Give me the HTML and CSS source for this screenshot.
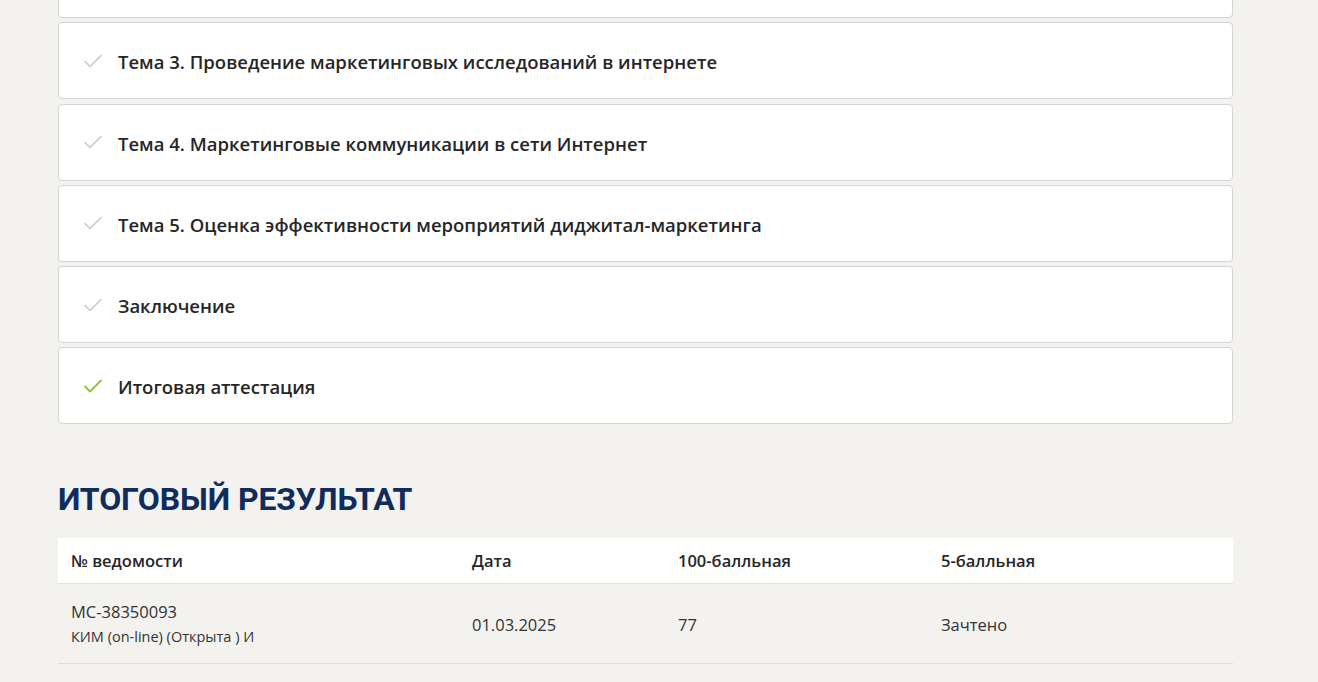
FILE: index.html
```html
<!DOCTYPE html>
<html lang="ru">
<head>
<meta charset="utf-8">
<title>Итоговый результат</title>
<link rel="stylesheet" href="styles.css">
</head>
<body>
<main class="page">
  <ul class="topics">
    <li class="topic"><span class="check"><svg viewBox="0 0 18 14"><path d="M1 7.5 L6 12.5 L17 1.5"/></svg></span><span class="topic-title">Тема 2. Инструменты интернет-маркетинга</span></li>
    <li class="topic"><span class="check"><svg viewBox="0 0 18 14"><path d="M1 7.5 L6 12.5 L17 1.5"/></svg></span><span class="topic-title">Тема 3. Проведение маркетинговых исследований в интернете</span></li>
    <li class="topic"><span class="check"><svg viewBox="0 0 18 14"><path d="M1 7.5 L6 12.5 L17 1.5"/></svg></span><span class="topic-title">Тема 4. Маркетинговые коммуникации в сети Интернет</span></li>
    <li class="topic"><span class="check"><svg viewBox="0 0 18 14"><path d="M1 7.5 L6 12.5 L17 1.5"/></svg></span><span class="topic-title">Тема 5. Оценка эффективности мероприятий диджитал-маркетинга</span></li>
    <li class="topic"><span class="check"><svg viewBox="0 0 18 14"><path d="M1 7.5 L6 12.5 L17 1.5"/></svg></span><span class="topic-title">Заключение</span></li>
    <li class="topic done"><span class="check"><svg viewBox="0 0 18 14"><path d="M1 7.5 L6 12.5 L17 1.5"/></svg></span><span class="topic-title">Итоговая аттестация</span></li>
  </ul>

  <h2 class="result-title">ИТОГОВЫЙ РЕЗУЛЬТАТ</h2>

  <table class="result">
    <thead>
      <tr>
        <th class="c1">№ ведомости</th>
        <th class="c2">Дата</th>
        <th class="c3">100-балльная</th>
        <th class="c4">5-балльная</th>
      </tr>
    </thead>
    <tbody>
      <tr>
        <td class="c1"><div class="num">МС-38350093</div><div class="sub">КИМ (on-line) (Открыта ) И</div></td>
        <td class="c2">01.03.2025</td>
        <td class="c3">77</td>
        <td class="c4">Зачтено</td>
      </tr>
    </tbody>
  </table>
</main>
</body>
</html>
```

FILE: styles.css
```css
html, body {
  margin: 0;
  padding: 0;
}
body {
  background: #f3f2ef;
  font-family: "Open Sans", "Noto Sans", sans-serif;
  color: #222;
  overflow: hidden;
}
.page {
  width: 1175px;
  margin: -59px 0 0 58px;
}
.topics {
  list-style: none;
  margin: 0;
  padding: 0;
  display: flex;
  flex-direction: column;
  gap: 4.25px;
}
.topic {
  box-sizing: border-box;
  height: 77px;
  background: #fff;
  border: 1px solid #d4d4d4;
  border-radius: 4px;
  display: flex;
  align-items: center;
  padding-left: 25px;
}
.check {
  width: 18px;
  height: 14px;
  margin-right: 16px;
  display: flex;
}
.check svg {
  width: 18px;
  height: 14px;
  fill: none;
  stroke: #c9c9c9;
  stroke-width: 1.6;
  stroke-linecap: round;
  stroke-linejoin: round;
}
.topic.done .check svg {
  stroke: #8cc43c;
  stroke-width: 1.9;
}
.topic-title {
  font-size: 18.5px;
  font-weight: 600;
  color: #262626;
  position: relative;
  top: 1px;
}
.result-title {
  margin: 55px 0 19px;
  font-family: Roboto, "Open Sans", sans-serif;
  font-size: 32px;
  font-weight: 700;
  color: #0e2c5c;
  line-height: 40px;
  letter-spacing: -0.1px;
}
.result {
  width: 1175px;
  border-collapse: collapse;
  table-layout: fixed;
}
.result th {
  background: #fff;
  height: 45px;
  padding: 0 13px;
  text-align: left;
  font-size: 16.5px;
  font-weight: 600;
  color: #262626;
  border-bottom: 1px solid #e0dfdc;
  box-sizing: border-box;
  vertical-align: middle;
}
.result td {
  height: 80px;
  padding: 2px 13px 0;
  font-size: 16.5px;
  color: #333;
  border-bottom: 1px solid #dddcd9;
  vertical-align: middle;
  box-sizing: border-box;
}
.c1 { width: 401px; }
.c2 { width: 206px; }
.c3 { width: 263px; }
.c4 { width: 305px; }
.num {
  font-size: 16.5px;
  line-height: 25px;
}
.sub {
  font-size: 14.5px;
  line-height: 25px;
  color: #333;
}
```
